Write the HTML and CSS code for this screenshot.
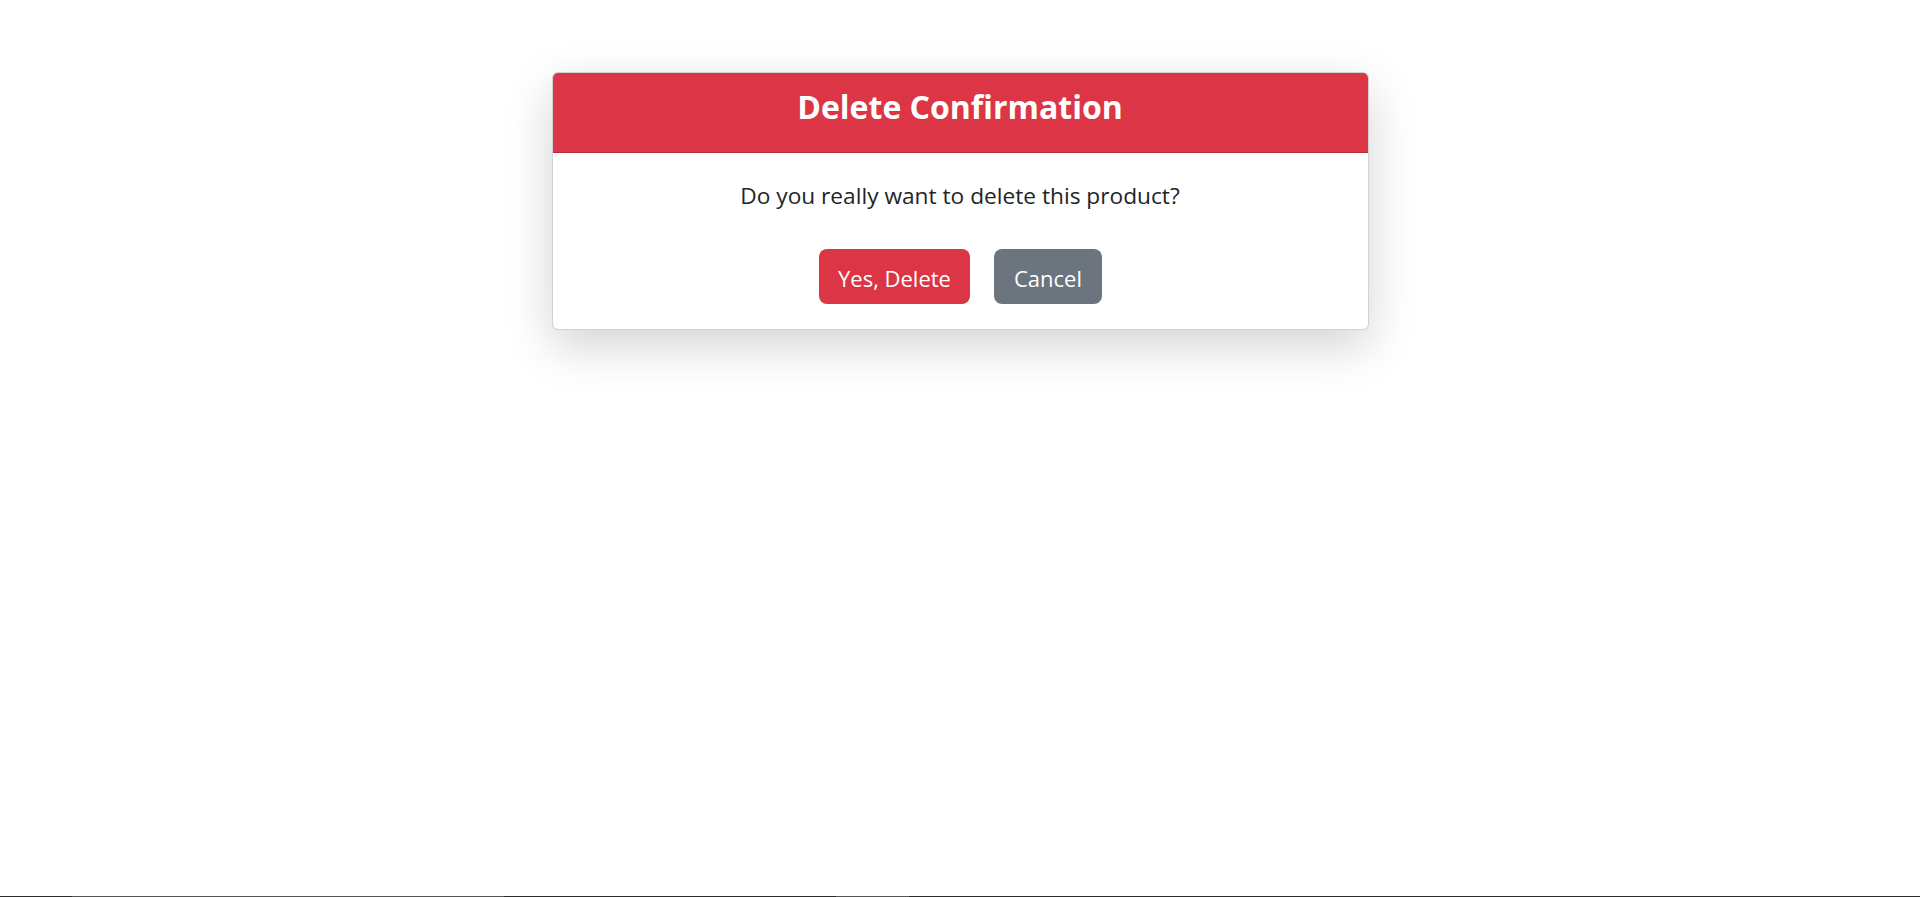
FILE: index.html
```html
<!DOCTYPE html>
<html>
<head>
<meta charset="utf-8">
<title>Delete Confirmation</title>
<link rel="stylesheet" href="styles.css">
</head>
<body>
<main class="page">
  <section class="card">
    <header class="card-header">
      <h2 class="card-title">Delete Confirmation</h2>
    </header>
    <div class="card-body">
      <p class="message">Do you really want to delete this product?</p>
      <div class="actions">
        <button class="btn btn-danger" type="button">Yes, Delete</button>
        <button class="btn btn-secondary" type="button">Cancel</button>
      </div>
    </div>
  </section>
</main>
<div class="bottom-strip">
  <span class="seg seg-dark seg-a"></span>
  <span class="seg seg-light seg-b"></span>
  <span class="seg seg-dark seg-c"></span>
  <span class="seg seg-light seg-d"></span>
  <span class="seg seg-dark seg-e"></span>
</div>
</body>
</html>
```

FILE: styles.css
```css
* { box-sizing: border-box; }
html, body { margin: 0; padding: 0; background: #fff; }
body {
  font-family: "Open Sans", "Noto Sans", sans-serif;
  color: #212529;
  min-height: 100vh;
}
.page {
  display: flex;
  justify-content: center;
  align-items: flex-start;
  padding: 72px 0 120px;
}
.card {
  width: 817px;
  background: #fff;
  border: 1px solid rgba(0, 0, 0, 0.175);
  border-radius: 6px;
  box-shadow: 0 16px 48px rgba(0, 0, 0, 0.175);
}
.card-header {
  background: #dc3545;
  color: #fff;
  border-bottom: 1px solid rgba(0, 0, 0, 0.175);
  border-radius: 5px 5px 0 0;
  padding: 15px 16px 25.6px;
  text-align: center;
}
.card-title {
  margin: 0;
  font-size: 32px;
  font-weight: 700;
  line-height: 38.4px;
}
.card-body {
  padding: 26px 16px 25px;
  text-align: center;
}
.message {
  margin: 0;
  font-size: 22.7px;
  line-height: 34px;
}
.actions {
  display: flex;
  justify-content: center;
  gap: 24px;
  margin-top: 36px;
}
.btn {
  font-family: "Open Sans", "Noto Sans", sans-serif;
  font-size: 22px;
  line-height: 33px;
  height: 55px;
  padding: 3px 19.5px 0;
  border: 0;
  border-radius: 8px;
  color: #fff;
  cursor: pointer;
}
.btn-danger { background: #dc3545; }
.btn-secondary { background: #6c757d; }
.bottom-strip {
  position: fixed;
  left: 0;
  right: 0;
  bottom: 0;
  height: 1px;
  display: flex;
}
.seg { display: block; height: 1px; }
.seg-dark { background: #2b2b2b; }
.seg-light { background: #555555; }
.seg-a { width: 72px; }
.seg-b { width: 432px; }
.seg-c { width: 332px; }
.seg-d { width: 73px; }
.seg-e { flex: 1; }
```
